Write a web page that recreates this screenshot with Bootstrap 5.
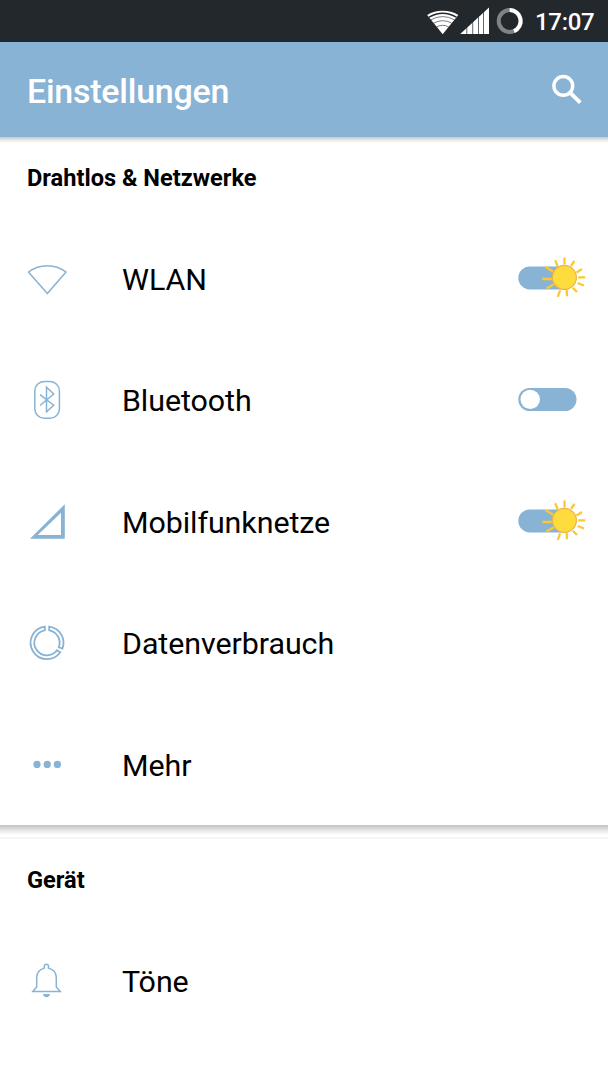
<!DOCTYPE html>
<html lang="de">
<head>
<meta charset="utf-8">
<meta name="viewport" content="width=device-width, initial-scale=1">
<title>Einstellungen</title>
<link href="https://cdn.jsdelivr.net/npm/bootstrap@5.3.0/dist/css/bootstrap.min.css" rel="stylesheet">
<style>
:root { --tint: #88b3d4; }
body { font-family: Roboto, "Liberation Sans", sans-serif; color: #000; background: #fff; }
svg { display: block; flex: none; }
.status-bar { height: 42px; background: #23282c; color: #fff; padding-right: 13px; }
.status-time { font-size: 24px; font-weight: 500; line-height: 42px; width: 60px; white-space: nowrap; margin-left: 6px; padding-top: 1px; letter-spacing: -.3px; }
.app-bar { height: 95px; background: var(--tint); color: #fff; padding: 0 25px 0 27px; }
.app-title { font-size: 34px; font-weight: 500; line-height: 40px; margin: 2px 0 0; letter-spacing: -.25px; }
.section-top { background: linear-gradient(#c5c5c5, #e8e8e8 3px, #fff 6px) no-repeat; }
.section-title { height: 81px; padding-left: 27px; font-size: 23.6px; font-weight: 700; line-height: 28px; margin: 0; padding-top: 1px; }
.setting { height: 121.5px; padding: 0 20px 0 27px; }
.setting-name { font-size: 30.4px; line-height: 40px; margin-left: 55px; padding-top: 2px; letter-spacing: -.06px; }
.divider { height: 14.1px; margin-top: -.6px; background: linear-gradient(#c0c4c4, #dcdede 4px, #f4f4f4 8px, #fff 10px, #fff 12px, #f6f6f6 12px); }
.line-icon { fill: none; stroke: var(--tint); stroke-width: 1.5; }
</style>
</head>
<body>
<svg width="0" height="0" class="position-absolute">
  <symbol id="sun-switch" viewBox="0 0 70 44">
    <rect x=".3" y="9.4" width="58" height="23" rx="11.5" fill="#88b3d4"/>
    <g stroke="#f8c930" stroke-width="2.3">
      <path d="M46.5.5V7.5M37.2 3.2l2.5 6M27.4 10l8 4.8M24.3 22h9.5M28.5 31.5l7.4-4.2M39.8 39.8l2.3-6.5M49 39.3l-.3-6.5M59 35l-4.2-4.2M66 28.5l-6.4-2.5M67.2 20.4h-7M64 12l-5.5 3.4M56.4 3.8L53 9"/>
    </g>
    <circle cx="46.4" cy="20.4" r="12" fill="#fedc3d" stroke="#efb142" stroke-width="1.1"/>
  </symbol>
</svg>

<header>
  <div class="status-bar d-flex align-items-center justify-content-end">
    <svg width="105" height="42" viewBox="0 0 105 42">
      <path fill="#fff" d="M18.7 34.3L3.2 15Q10 10.8 18.7 10.8T34.3 15Z"/>
      <g fill="none" stroke="#23282c" stroke-width=".8">
        <path stroke-width="1.4" d="M5 17.2q13.7-7.8 27.4 0"/>
        <path stroke-width=".6" d="M7 19.8q11.7-6.5 23.4 0M9.5 23.2q9.2-5 18.4 0M12.5 27q6.2-3.4 12.4 0"/>
      </g>
      <path fill="#fff" d="M36.2 34L65 7.6V34Z"/>
      <path stroke="#23282c" stroke-width=".7" d="M42.8 26v8M48.7 20v14M54.5 14v20M59.5 10v24"/>
      <circle cx="85.7" cy="21" r="11" fill="none" stroke="#808385" stroke-width="4"/>
      <path fill="none" stroke="#fff" stroke-width="4" d="M85.7 10a11 11 0 0 1 4.3 21.1"/>
    </svg>
    <div class="status-time">17:07</div>
  </div>
  <div class="app-bar d-flex align-items-center justify-content-between">
    <h1 class="app-title">Einstellungen</h1>
    <svg width="32" height="32" viewBox="0 0 32 32" fill="none" stroke="#fff">
      <circle cx="12.3" cy="11.9" r="9.4" stroke-width="3.4"/>
      <path d="M19 18.6L29.3 28.6" stroke-width="4"/>
    </svg>
  </div>
</header>

<main>
  <section>
    <h2 class="section-title section-top d-flex align-items-center">Drahtlos &amp; Netzwerke</h2>
    <div class="setting d-flex align-items-center">
      <svg class="line-icon" width="40" height="40" viewBox="0 0 40 40"><path d="M20.3 34.6L1.5 13Q10 6.7 20.3 6.7T39 13Z"/></svg>
      <div class="setting-name flex-grow-1">WLAN</div>
      <svg width="70" height="44"><use href="#sun-switch"/></svg>
    </div>
    <div class="setting d-flex align-items-center">
      <svg class="line-icon" width="40" height="40" viewBox="0 0 40 40"><rect x="7.8" y="1.5" width="24.6" height="36.7" rx="9.5"/><path d="M13 14.7l13.7 10.5-7.2 6.7V7.3l7.2 6.7L13 25.5"/></svg>
      <div class="setting-name flex-grow-1">Bluetooth</div>
      <svg width="70" height="44" viewBox="0 0 70 44"><rect x=".3" y="10" width="58.2" height="23" rx="11.5" fill="#88b3d4"/><circle cx="12.2" cy="21.4" r="9.7" fill="#fff"/></svg>
    </div>
    <div class="setting d-flex align-items-center">
      <svg width="40" height="40" viewBox="0 0 40 40"><path fill="#88b3d4" fill-rule="evenodd" d="M3 36.8L37.8 2.2V36.8ZM10.8 33H34V10.8Z"/></svg>
      <div class="setting-name flex-grow-1">Mobilfunknetze</div>
      <svg width="70" height="44"><use href="#sun-switch"/></svg>
    </div>
    <div class="setting d-flex align-items-center">
      <svg class="line-icon" width="40" height="40" viewBox="0 0 40 40" style="stroke-width:1.8"><path d="M22.2 3.6A16.3 16.3 0 0 1 35.4 25.6L31.8 24.2A12.6 12.6 0 0 0 22.2 7.3ZM17.8 3.6A16.3 16.3 0 1 0 33.2 29.2L30 27.3A12.6 12.6 0 1 1 17.8 7.3Z"/></svg>
      <div class="setting-name flex-grow-1">Datenverbrauch</div>
    </div>
    <div class="setting d-flex align-items-center">
      <svg width="40" height="40" viewBox="0 0 40 40" fill="#88b3d4"><circle cx="10" cy="19.4" r="3.6"/><circle cx="20.2" cy="19.4" r="3.6"/><circle cx="30.4" cy="19.4" r="3.6"/></svg>
      <div class="setting-name flex-grow-1">Mehr</div>
    </div>
  </section>

  <div class="divider"></div>

  <section>
    <h2 class="section-title d-flex align-items-center">Gerät</h2>
    <div class="setting d-flex align-items-center">
      <svg class="line-icon" width="40" height="40" viewBox="0 0 40 40"><path d="M5.8 30.6L9.7 26V16.5C9.7 11.5 13 8.3 17.3 7.1V5.3Q17.5 3.2 19.4 3.2T21.5 5.3V7.1C26 8.3 29.3 11.5 29.3 16.5V26L33.3 30.6Z"/><path d="M16 33h7q-.8 3.2-3.5 3.2T16 33Z" fill="#88b3d4" stroke="none"/></svg>
      <div class="setting-name flex-grow-1">Töne</div>
    </div>
  </section>
</main>
<script src="https://cdn.jsdelivr.net/npm/bootstrap@5.3.0/dist/js/bootstrap.bundle.min.js"></script>
</body>
</html>
